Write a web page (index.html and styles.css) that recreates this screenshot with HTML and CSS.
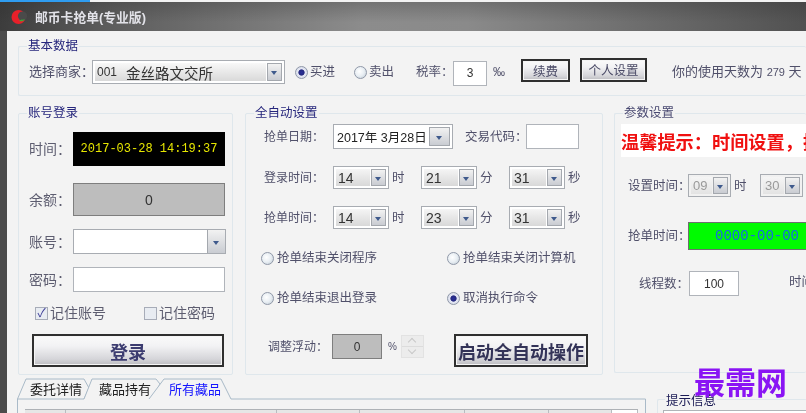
FILE: index.html
```html
<!DOCTYPE html>
<html lang="zh-CN">
<head>
<meta charset="utf-8">
<title>邮币卡抢单(专业版)</title>
<link rel="stylesheet" href="styles.css">
</head>
<body>
<div class="page">
  <div class="strip"></div>
  <header class="titlebar">
    <svg class="logo" width="16" height="16" viewBox="0 0 16 16"><circle cx="7.500" cy="8" r="7" fill="#e8202a"/><circle cx="11.500" cy="7" r="4.600" fill="#4a4a4a"/><path d="M8 11.500c2 1.500 4.500 1 6-1.500-1 .5-2.200.8-3.200.6z" fill="#3aa83a"/></svg>
    <span class="title">邮币卡抢单(专业版)</span>
  </header>
  <main class="window">
    <section class="group base">
      <span class="legend">基本数据</span>
      <div class="base-row">
        <span class="lab merchant-lab">选择商家：</span>
        <span class="combo merchant"><span class="val merchant-val"><small>001</small> 金丝路文交所</span><i class="drop"></i></span>
        <span class="radio on buy"></span><span class="lab rtext">买进</span>
        <span class="radio sell"></span><span class="lab rtext">卖出</span>
        <span class="lab tax">税率：</span>
        <span class="input taxinput">3</span>
        <span class="lab permil">‰</span>
        <button class="btn renew">续费</button>
        <button class="btn personal">个人设置</button>
        <span class="lab days">你的使用天数为 <small>279</small> 天</span>
      </div>
    </section>

    <div class="columns">
      <section class="group login">
        <span class="legend">账号登录</span>
        <div class="login-grid">
          <span class="lab big">时间：</span><span class="clock">2017-03-28 14:19:37</span>
          <span class="lab big second">余额：</span><span class="balance second">0</span>
          <span class="lab big">账号：</span><span class="combo account"><span class="val white"></span><i class="drop"></i></span>
          <span class="lab big">密码：</span><span class="input password"></span>
        </div>
        <div class="remember">
          <span class="check on">✓</span><span class="lab big first">记住账号</span>
          <span class="check"></span><span class="lab big">记住密码</span>
        </div>
        <button class="btn login-btn">登录</button>
      </section>

      <section class="group auto">
        <span class="legend">全自动设置</span>
        <div class="row date-row">
          <span class="lab rowlab">抢单日期：</span>
          <span class="combo date"><span class="val white date-val">2017年 3月28日</span><i class="drop"></i></span>
          <span class="lab code">交易代码：</span>
          <span class="input codeinput"></span>
        </div>
        <div class="row time-row first-time">
          <span class="lab rowlab">登录时间：</span>
          <span class="combo time"><span class="val">14</span><i class="drop"></i></span><span class="lab unit">时</span>
          <span class="combo time"><span class="val">21</span><i class="drop"></i></span><span class="lab unit">分</span>
          <span class="combo time"><span class="val">31</span><i class="drop"></i></span><span class="lab unit">秒</span>
        </div>
        <div class="row time-row">
          <span class="lab rowlab">抢单时间：</span>
          <span class="combo time"><span class="val">14</span><i class="drop"></i></span><span class="lab unit">时</span>
          <span class="combo time"><span class="val">23</span><i class="drop"></i></span><span class="lab unit">分</span>
          <span class="combo time"><span class="val">31</span><i class="drop"></i></span><span class="lab unit">秒</span>
        </div>
        <div class="options">
          <span class="opt"><span class="radio"></span><span class="lab">抢单结束关闭程序</span></span>
          <span class="opt"><span class="radio"></span><span class="lab">抢单结束关闭计算机</span></span>
          <span class="opt"><span class="radio"></span><span class="lab">抢单结束退出登录</span></span>
          <span class="opt"><span class="radio on"></span><span class="lab">取消执行命令</span></span>
        </div>
        <div class="row float-row">
          <span class="lab floatlab">调整浮动：</span>
          <span class="balance floatbox">0</span>
          <span class="lab pct">%</span>
          <span class="spin"><i class="up"></i><i class="down"></i></span>
          <button class="btn start">启动全自动操作</button>
        </div>
      </section>

      <section class="group params">
        <span class="legend grey">参数设置</span>
        <div class="notice">温馨提示：时间设置，提</div>
        <div class="row set-row">
          <span class="lab plab">设置时间：</span>
          <span class="combo small-time"><span class="val off">09</span><i class="drop"></i></span><span class="lab unit2">时</span>
          <span class="combo small-time"><span class="val off">30</span><i class="drop"></i></span>
        </div>
        <div class="row grab-row">
          <span class="lab plab">抢单时间：</span>
          <span class="green">0000-00-00</span>
        </div>
        <div class="row thread-row">
          <span class="lab plab threadlab">线程数：</span>
          <span class="input threads">100</span>
          <span class="lab timecut">时间</span>
        </div>
      </section>
    </div>

    <div class="bottom">
      <div class="tabpanel">
        <svg class="tabshape" width="640" height="35" viewBox="0 0 640 35"><path d="M.5 35V21L9 1H67L72 10L67 21H.5" fill="#f3f3f3" stroke="#a9bac8"/><path d="M67 21L75 1H139L143 6L135 21" fill="#f3f3f3" stroke="#a9bac8"/><path d="M132 21L147 1H204L214 21H628.500V35" fill="#f3f3f3" stroke="#a9bac8"/></svg>
        <div class="tabs"><span class="tab">委托详情</span><span class="tab">藏品持有</span><span class="tab active">所有藏品</span></div>
        <div class="thead"><span class="c1"></span><span class="c2"></span><span class="c3"></span><span class="c4"></span><span class="c5"></span><span class="c6"></span><span class="c7"></span></div>
      </div>
      <section class="group tips">
        <span class="legend dark">提示信息</span>
        <div class="tipbox"></div>
      </section>
    </div>
  </main>
  <div class="watermark">最需网</div>
</div>
</body>
</html>
```
FILE: styles.css
```css
* { box-sizing: border-box; }
html, body { margin: 0; padding: 0; }
body { width: 806px; height: 413px; overflow: hidden; background: #f3f3f3; font-family: "Liberation Sans", "Noto Sans CJK SC", sans-serif; }
.page { position: relative; width: 806px; height: 413px; overflow: hidden; filter: blur(0.4px); }
.strip { width: 90px; height: 2px; background: #2f9cf0; }
.titlebar { height: 29px; display: flex; align-items: center; padding-left: 11px; background: linear-gradient(180deg, rgba(40,40,40,.25), rgba(40,40,40,0) 70%), linear-gradient(90deg, #3c3c3c 0, #5a5a5a 12%, #8c8c8c 45%, #8a8a8a 58%, #515151 100%); }
.logo { margin-right: 8px; }
.title { font-size: 12.8px; font-weight: 700; color: #e2e2e8; }
.window { height: 382px; margin: 0; border-left: 7px solid #4b4b4b; padding: 15px 0 0 11px; background: #f3f3f3; }

.group { position: relative; border: 1px solid #dfe7ec; border-radius: 2px; }
.legend { display: block; width: max-content; margin: -9px 0 0 8px; padding: 0 1px; height: 16px; line-height: 16px; font-size: 12.5px; color: #26267c; background: #f3f3f3; }
.legend.grey { color: #4a4a72; }
.legend.dark { color: #1b1b55; }
.lab { font-size: 12.5px; color: #50506a; white-space: nowrap; line-height: 16px; flex: none; }
.lab.big { font-size: 14px; color: #5d5d70; }
small { font-size: 11px; }

.base { height: 50px; border-right: 0; }
.base-row { display: flex; align-items: center; height: 26px; margin-top: 5px; padding-left: 10px; }
.merchant-lab { width: 63px; font-size: 13px; }
.merchant { width: 193px; height: 24px; }
.buy { margin-left: 10px; }
.rtext { margin-left: 2px; width: 44px; }
.tax { width: 37px; margin-left: 3px; }
.taxinput { width: 34px; height: 25px; margin-top: 2px; font-size: 11px; }
.permil { margin-left: 6px; width: 28px; font-size: 12px; }
.btn { font-family: inherit; flex: none; border: 2px solid #2f2f2f; padding: 0; color: #4a4a66; background: linear-gradient(180deg, #fafafa 0, #f2f2f4 35%, #d5d5d9 80%, #bcbcc0 100%); box-shadow: inset 0 0 0 1px #f5f5f5; }
.renew { width: 49px; height: 23px; font-size: 12.5px; margin-top: -4px; }
.personal { width: 67px; height: 24px; font-size: 12.5px; margin: -5px 0 0 10px; }
.days { margin-left: 25px; font-size: 13px; }

.combo { display: inline-flex; align-items: center; gap: 1px; padding: 2px; background: #fff; border: 1px solid #a8acb2; flex: none; }
.val { flex: 1; height: 100%; padding-left: 2px; display: flex; align-items: center; gap: 8px; font-size: 13px; color: #333; background: linear-gradient(180deg, #f8f8f8, #d9d9d9); white-space: nowrap; overflow: hidden; }
.val.white { background: #fff; }
.val.off { color: #9a9a9a; background: linear-gradient(180deg, #f5f5f5, #e3e3e3); }
.val.merchant-val { font-size: 14.5px; color: #333; gap: 9px; }
.merchant-val small { font-size: 12px; }
.val.date-val { font-size: 12.5px; padding-left: 1px; color: #222; }
.drop { position: relative; display: block; width: 15px; height: 100%; flex: none; border: 1px solid #a4a8ae; background: linear-gradient(180deg, #f2f2f2, #c9ccd2); }
.drop::after { content: ""; position: absolute; left: 3px; top: 50%; margin-top: -1px; border: 3.5px solid transparent; border-top: 4px solid #3f5a8c; border-bottom: 0; }

.radio { display: block; flex: none; width: 13px; height: 13px; border-radius: 50%; border: 1px solid #9098a8; background: radial-gradient(circle at 40% 40%, #fff 0, #e8eef3 50%, #bcc8d2 100%); }
.radio.on { background: radial-gradient(circle at 50% 50%, #2a2f9a 0, #24287e 35%, #e6e8f4 45%, #cdd4e2 100%); }
.input { display: flex; align-items: center; justify-content: center; flex: none; background: #fff; border: 1px solid #b0b4ba; font-size: 12px; color: #333; }

.columns { display: flex; gap: 12px; margin-top: 17px; height: 262px; }
.login { width: 215px; flex: none; }
.login-grid { display: grid; grid-template-columns: 44px 152px; grid-template-rows: 34px 37px 25px 25px; row-gap: 13px; align-items: center; margin: 11px 0 0 10px; }
.second { margin-top: 4px; }
.clock { height: 34px; display: flex; align-items: center; justify-content: center; background: #000; color: #e6e600; font: 12px "Liberation Mono", monospace; }
.balance { display: flex; align-items: center; justify-content: center; height: 33px; background: #bdbdbd; border: 1px solid #7e7e7e; color: #333; font-size: 14px; }
.account { width: 153px; height: 25px; padding: 0; gap: 0; }
.account .drop { width: 18px; border-width: 0 0 0 1px; }
.account .drop::after { left: 5px; }
.password { height: 25px; width: 152px; }
.remember { display: flex; align-items: center; height: 18px; margin: 12px 0 0 16px; }
.check { display: flex; align-items: center; justify-content: center; flex: none; width: 13px; height: 13px; margin-right: 2px; border: 1px solid #a7acb8; background: #e8ecf2; font-size: 12px; line-height: 1; color: #3e3e98; }
.first { width: 94px; }
.login-btn { display: block; width: 192px; height: 33px; margin: 12px 0 0 13px; font-size: 18px; font-weight: 700; color: #3c3c70; }

.auto { width: 358px; flex: none; padding-left: 18px; }
.auto .legend { margin-left: -10px; }
.row { display: flex; align-items: center; }
.date-row { height: 25px; margin-top: 3px; }
.rowlab { width: 69px; font-size: 12px; }
.date { width: 120px; height: 25px; }
.date .drop { width: 21px; }
.date .drop::after { left: 6px; }
.code { margin-left: 12px; width: 61px; }
.codeinput { width: 53px; height: 25px; }
.time-row { height: 23px; }
.first-time { margin-top: 17px; }
.first-time + .time-row { margin-top: 17px; }
.time { width: 56px; height: 23px; }
.time .val { background: linear-gradient(180deg, #f5f5f5, #d8d8d8); font-size: 14px; }
.unit { width: 32px; padding-left: 3px; }
.options { display: grid; grid-template-columns: 186px 160px; row-gap: 24px; margin: 21px 0 0 -3px; }
.opt { display: flex; align-items: center; gap: 3px; height: 16px; }
.float-row { margin: 28px 0 0 0; height: 33px; align-items: flex-start; }
.floatlab { margin: 5px 0 0 4px; width: 64px; font-size: 12px; }
.floatbox { width: 50px; height: 25px; font-size: 12px; }
.pct { margin: 5px 0 0 6px; width: 13px; font-size: 10px; }
.spin { display: flex; flex-direction: column; width: 23px; height: 23px; margin-top: 1px; border: 1px solid #e2e2e2; background: #ececec; flex: none; }
.spin i { position: relative; flex: 1; display: block; }
.spin .up { border-bottom: 1px solid #dcdcdc; }
.spin i::after { content: ""; position: absolute; left: 7px; top: 3px; width: 5px; height: 5px; border: solid #c8c8c8; border-width: 1px 0 0 1px; transform: rotate(45deg); }
.spin .down::after { top: 0; transform: rotate(225deg); }
.start { width: 134px; height: 33px; margin-left: 30px; font-size: 18px; font-weight: 700; color: #333358; white-space: nowrap; }

.params { flex: 1; min-width: 0; margin-left: -1px; border-right: 0; height: 260px; }
.notice { height: 33px; margin: 3px 0 0 6px; display: flex; align-items: center; background: #fff; color: #f01010; font-size: 18.2px; font-weight: 700; white-space: nowrap; overflow: hidden; }
.plab { width: 60px; margin-left: 13px; }
.set-row { height: 23px; margin-top: 17px; }
.small-time { width: 43px; height: 23px; background: #f1f1f1; }
.unit2 { width: 29px; padding-left: 3px; }
.grab-row { height: 28px; margin-top: 25px; }
.green { flex: none; width: 120px; height: 28px; padding-left: 26px; display: flex; align-items: center; background: #00fb00; border: 1px solid #6e6e6e; color: #1668e6; font: 14px "Liberation Mono", monospace; }
.thread-row { height: 25px; margin-top: 21px; }
.threadlab { padding-left: 11px; }
.threads { width: 50px; height: 25px; margin-left: 1px; }
.timecut { margin-left: 50px; margin-top: -4px; }

.bottom { position: relative; display: flex; height: 35px; margin-top: 3px; }
.tabpanel { position: relative; width: 629px; margin-left: -1px; height: 35px; flex: none; }
.tabshape { position: absolute; left: 0; top: 0; }
.tabs { position: relative; display: flex; height: 21px; }
.tab { font-size: 13px; line-height: 24px; color: #222; }
.tab:nth-child(1) { margin-left: 13px; width: 69px; }
.tab:nth-child(2) { width: 70px; }
.tab.active { color: #1414ff; }
.thead { position: relative; display: flex; margin: 10px 0 0 8px; width: 613px; height: 4px; border-top: 1px solid #aeb2b6; background: #e6e6e6; }
.thead span { display: block; height: 100%; border-right: 1px solid #b8bcc0; }
.c1 { width: 41px; } .c2 { width: 211px; } .c3 { width: 83px; } .c4 { width: 105px; } .c5 { width: 84px; } .c6 { width: 63px; } .c7 { flex: 1; background: #fff; border: 0; }
.tips { position: relative; width: 150px; margin: 21px 0 0 11px; height: 40px; border-right: 0; flex: none; }
.tips .legend { margin: -5px 0 0 7px; height: 12px; line-height: 12px; }
.tipbox { position: absolute; left: 5px; right: 0; top: 10px; height: 10px; background: #fff; border: 1px solid #b0b4b8; }
.watermark { position: absolute; left: 694px; top: 368px; font: 700 31px/26px "Noto Sans CJK SC", sans-serif; color: #8a14f4; white-space: nowrap; }
```
